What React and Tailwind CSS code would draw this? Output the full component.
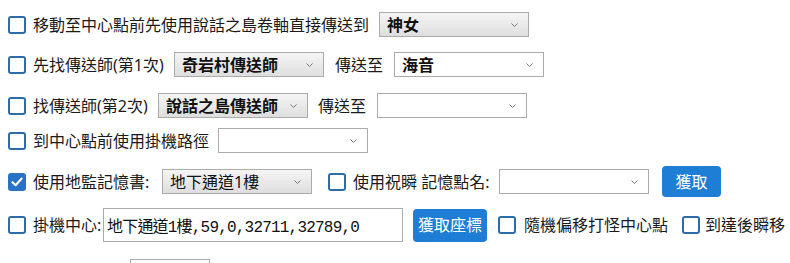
import React from "react";

const font = { fontFamily: '"Noto Sans", "Noto Sans CJK TC", sans-serif' };

const Check = ({ checked = false }) =>
  checked ? (
    <span className="flex h-[18px] w-[18px] shrink-0 items-center justify-center rounded-[3px] bg-[#2a72c6]">
      <svg width="12" height="10" viewBox="0 0 13 11" fill="none">
        <path d="M1.5 5.8 L5 9 L11.5 1.8" stroke="#fff" strokeWidth="2.4" strokeLinecap="round" strokeLinejoin="round" />
      </svg>
    </span>
  ) : (
    <span className="block h-[18px] w-[18px] shrink-0 rounded-[3px] border-2 border-[#2d6ca8] bg-white" />
  );

const Chevron = () => (
  <svg width="7" height="5" viewBox="0 0 7 5" className="absolute right-[10px] top-1/2 -translate-y-1/2">
    <path d="M0.5 1 L3.5 4 L6.5 1" stroke="#777" strokeWidth="1" fill="none" />
  </svg>
);

const Select = ({ value = "", bold = false, shaded = false, className = "" }) => (
  <div
    className={`relative flex h-[25px] w-[150px] shrink-0 items-center border border-[#ababab] pl-[7px] text-[16px] text-[#111] ${
      shaded ? "bg-gradient-to-b from-[#f5f5f5] to-[#dedede]" : "bg-white"
    } ${bold ? "font-bold" : ""} ${className}`}
  >
    <span className="leading-none">{value}</span>
    <Chevron />
  </div>
);

const Btn = ({ children, className = "" }) => (
  <button className={`flex items-center justify-center rounded-[4px] bg-[#1e7dd4] text-[16px] text-white ${className}`}>
    {children}
  </button>
);

const Label = ({ children, className = "" }) => (
  <span className={`shrink-0 whitespace-nowrap text-[16px] leading-none text-[#1a1a1a] ${className}`}>{children}</span>
);

export default function App() {
  return (
    <div className="h-[263px] w-[790px] overflow-hidden bg-white pl-2 pt-[12px]" style={font}>
      {/* 1 */}
      <div className="flex h-[25px] items-center">
        <Check />
        <Label className="ml-[7px]">移動至中心點前先使用說話之島卷軸直接傳送到</Label>
        <Select value="神女" bold shaded className="ml-[10px]" />
      </div>

      {/* 2 */}
      <div className="mt-[15px] flex h-[25px] items-center">
        <Check />
        <Label className="ml-[7px] w-[130px]">先找傳送師(第1次)</Label>
        <Select value="奇岩村傳送師" bold shaded className="ml-[11px]" />
        <Label className="ml-[11px]">傳送至</Label>
        <Select value="海音" bold className="ml-[11px]" />
      </div>

      {/* 3 */}
      <div className="mt-[16px] flex h-[25px] items-center">
        <Check />
        <Label className="ml-[7px] w-[114px]">找傳送師(第2次)</Label>
        <Select value="說話之島傳送師" bold shaded className="ml-[11px]" />
        <Label className="ml-[10px]">傳送至</Label>
        <Select className="ml-[11px]" />
      </div>

      {/* 4 */}
      <div className="mt-[10px] flex h-[25px] items-center">
        <Check />
        <Label className="ml-[7px]">到中心點前使用掛機路徑</Label>
        <Select className="ml-[9px]" />
      </div>

      {/* 5 */}
      <div className="mt-[13px] flex h-[31px] items-center">
        <Check checked />
        <Label className="ml-[7px] w-[129px]">使用地監記憶書:</Label>
        <Select value="地下通道1樓" shaded />
        <span className="ml-[16px]">
          <Check />
        </span>
        <Label className="ml-[7px] w-[133px]">使用祝瞬 記憶點名:</Label>
        <Select className="ml-[13px]" />
        <Btn className="ml-[13px] h-[31px] w-[59px]">獲取</Btn>
      </div>

      {/* 6 */}
      <div className="mt-[11px] flex h-[34px] items-center">
        <Check />
        <Label className="ml-[7px] w-[70px]">掛機中心:</Label>
        <input
          readOnly
          value="地下通道1樓,59,0,32711,32789,0"
          className="h-[34px] w-[300px] border border-[#ababab] bg-white pl-[3px] text-[16px] tracking-[-0.8px] text-[#111] outline-none"
          style={{ fontFamily: '"Liberation Mono", "Noto Sans CJK TC", monospace' }}
        />
        <Btn className="ml-[10px] h-[33px] w-[74px]">獲取座標</Btn>
        <span className="ml-[11px]">
          <Check />
        </span>
        <Label className="ml-[8px] w-[144px]">隨機偏移打怪中心點</Label>
        <span className="ml-[14px]">
          <Check />
        </span>
        <Label className="ml-[5px]">到達後瞬移</Label>
      </div>

      {/* 7 (cut off) */}
      <div className="mt-[17px] flex h-[30px] items-start">
        <div className="ml-[122px] h-[30px] w-[80px] border border-[#ababab] bg-white" />
      </div>
    </div>
  );
}
